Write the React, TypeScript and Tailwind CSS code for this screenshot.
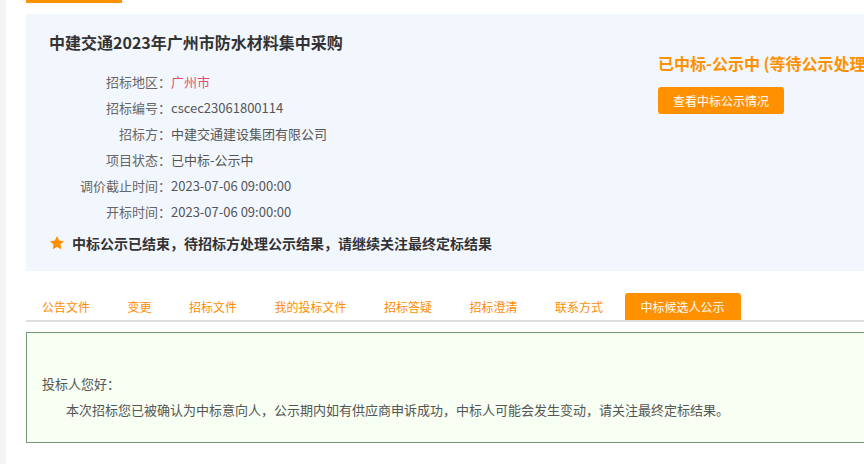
import React from "react";

const font = { fontFamily: '"Noto Sans CJK SC", "Noto Sans", sans-serif' };

const rows: { label: string; value: string; red?: boolean }[] = [
  { label: "招标地区：", value: "广州市", red: true },
  { label: "招标编号：", value: "cscec23061800114" },
  { label: "招标方：", value: "中建交通建设集团有限公司" },
  { label: "项目状态：", value: "已中标-公示中" },
  { label: "调价截止时间：", value: "2023-07-06 09:00:00" },
  { label: "开标时间：", value: "2023-07-06 09:00:00" },
];

const tabs = ["公告文件", "变更", "招标文件", "我的投标文件", "招标答疑", "招标澄清", "联系方式"];

export default function App() {
  return (
    <div className="w-[864px] h-[464px] overflow-hidden flex bg-white" style={font}>
      <div className="w-[6px] shrink-0 bg-[#f4f4f4]" />
      <div className="flex-1 min-w-0 pl-[20px]">
        <div className="w-[1100px]">
          <div className="w-[96px] h-[3px] bg-[#ff9100]" />
          <div className="mt-[11px] h-[257px] bg-[#f2f7fe] pl-[23px] flex">
            <div className="w-[609px] shrink-0 pt-[16px]">
              <h1 className="text-[16px] leading-[24px] font-bold text-[#333]">
                中建交通2023年广州市防水材料集中采购
              </h1>
              <div className="mt-[15px]">
                {rows.map((r) => (
                  <div key={r.label} className="flex h-[26px] items-center text-[13px]">
                    <span className="w-[122px] text-right text-[#666]">{r.label}</span>
                    <span className={r.red ? "text-[#e64d74]" : "text-[#555]"}>{r.value}</span>
                  </div>
                ))}
              </div>
              <div className="flex h-[26px] items-center mt-[5px]">
                <svg width="16" height="16" viewBox="0 0 24 24" className="ml-[0px]">
                  <path
                    d="M12 1.5l3.2 6.7 7.3 1-5.3 5.1 1.3 7.2L12 18l-6.5 3.5 1.3-7.2-5.3-5.1 7.3-1z"
                    fill="#ff9100"
                  />
                </svg>
                <span className="ml-[7px] text-[14px] font-bold text-[#333]">
                  中标公示已结束，待招标方处理公示结果，请继续关注最终定标结果
                </span>
              </div>
            </div>
            <div className="pt-[37px]">
              <div className="text-[16px] leading-[24px] font-bold text-[#ff9000] whitespace-nowrap">
                已中标-公示中 (等待公示处理结果)
              </div>
              <button className="mt-[12px] w-[126px] h-[27px] rounded-[3px] bg-[#ff9100] text-white text-[12px] leading-[27px]">
                查看中标公示情况
              </button>
            </div>
          </div>
          <div className="mt-[22px] flex gap-[5.5px] border-b-2 border-[#dedede] h-[29px]">
            {tabs.map((t) => (
              <div key={t} className="px-4 h-[27px] leading-[27px] text-[12px] text-[#ff8c00] whitespace-nowrap">
                {t}
              </div>
            ))}
            <div className="px-4 h-[27px] leading-[27px] text-[12px] text-white bg-[#ff9100] rounded-t-[3px] whitespace-nowrap">
              中标候选人公示
            </div>
          </div>
          <div className="mt-[10px] h-[111px] border border-[#729d72] bg-[#f8fff3] pl-[15px] pt-[38px] text-[13px] leading-[26px] text-[#555]">
            <p>投标人您好：</p>
            <p className="pl-[24px]">
              本次招标您已被确认为中标意向人，公示期内如有供应商申诉成功，中标人可能会发生变动，请关注最终定标结果。
            </p>
          </div>
        </div>
      </div>
    </div>
  );
}
